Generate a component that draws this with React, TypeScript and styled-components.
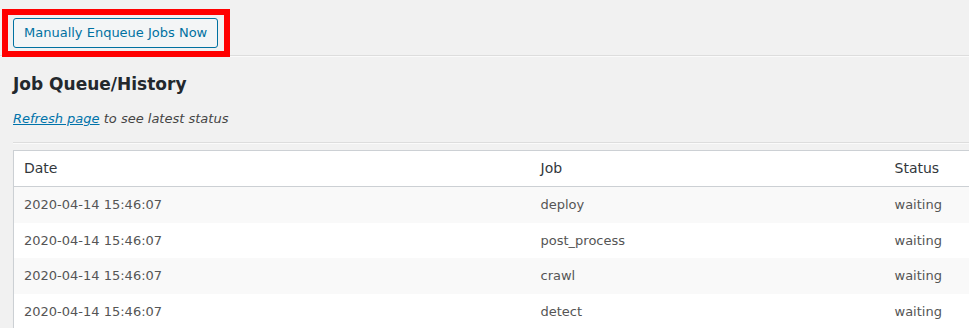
import styled, { createGlobalStyle } from "styled-components";

const adminBg = "#f1f1f1";
const tableBorder = "#ccd0d4";
const wpBlue = "#0071a1";

const GlobalStyle = createGlobalStyle`
  html, body {
    margin: 0;
    padding: 0;
    background: ${adminBg};
    overflow: hidden;
  }
  body {
    font-family: "DejaVu Sans", "Noto Sans", sans-serif;
    font-size: 13px;
    line-height: 1.4em;
    color: #444;
  }
`;

const Page = styled.div`
  width: 969px;
  height: 328px;
  overflow: hidden;
`;

const TopBar = styled.div`
  display: flex;
  align-items: flex-start;
  padding: 9px 0 0 2px;
  height: 46px;
`;

// red annotation frame drawn over the button (and the divider under it)
const Highlight = styled.div`
  position: relative;
  z-index: 1;
  display: flex;
  border: 6px solid #ff0000;
  padding: 3px 6px 3px 5px;
  background: ${adminBg};
`;

const Button = styled.button`
  font-family: inherit;
  font-size: 13px;
  line-height: 28px;
  min-height: 30px;
  height: 30px;
  padding: 0 10px;
  margin: 0;
  color: ${wpBlue};
  border: 1px solid ${wpBlue};
  border-radius: 3px;
  background: #f3f5f6;
  cursor: pointer;
  white-space: nowrap;
`;

const Divider = styled.hr`
  margin: 0;
  border: 0;
  border-top: 1px solid #dddddd;
  border-bottom: 1px solid #fafafa;
  height: 0;
`;

const Main = styled.div`
  padding-left: 13px;
`;

const Heading = styled.h2`
  margin: 16px 0 14px;
  font-size: 17px;
  line-height: 1.3;
  font-weight: 700;
  color: #23282d;
`;

const Note = styled.p`
  margin: 0 0 13px;
  font-style: italic;
  font-size: 13px;
  line-height: 1.5;
  color: #444;

  a {
    color: #0073aa;
    text-decoration: underline;
  }
`;

const Table = styled.table`
  width: 1000px;
  margin-top: 6px;
  table-layout: fixed;
  border-collapse: collapse;
  border-spacing: 0;
  background: #fff;
  border: 1px solid ${tableBorder};
  box-shadow: 0 1px 1px rgba(0, 0, 0, 0.04);
`;

const Th = styled.th`
  text-align: left;
  font-weight: 400;
  font-size: 14px;
  line-height: 1.4em;
  padding: 8px 10px;
  color: #32373c;
  border-bottom: 1px solid ${tableBorder};
`;

const Row = styled.tr<{ $alt: boolean }>`
  background: ${(p) => (p.$alt ? "#f9f9f9" : "#fff")};
`;

const Td = styled.td`
  font-size: 13px;
  line-height: 1.5em;
  padding: 8px 10px;
  color: #555;
  white-space: nowrap;
`;

const jobs = [
  { date: "2020-04-14 15:46:07", job: "deploy", status: "waiting" },
  { date: "2020-04-14 15:46:07", job: "post_process", status: "waiting" },
  { date: "2020-04-14 15:46:07", job: "crawl", status: "waiting" },
  { date: "2020-04-14 15:46:07", job: "detect", status: "waiting" },
];

export default function App() {
  return (
    <Page>
      <GlobalStyle />
      <TopBar>
        <Highlight>
          <Button type="button">Manually Enqueue Jobs Now</Button>
        </Highlight>
      </TopBar>
      <Divider />
      <Main>
        <Heading>Job Queue/History</Heading>
        <Note>
          <a href="#">Refresh page</a> to see latest status
        </Note>
        <Divider />
        <Table>
          <colgroup>
            <col style={{ width: 517 }} />
            <col style={{ width: 354 }} />
            <col />
          </colgroup>
          <thead>
            <tr>
              <Th>Date</Th>
              <Th>Job</Th>
              <Th>Status</Th>
            </tr>
          </thead>
          <tbody>
            {jobs.map((j, i) => (
              <Row key={i} $alt={i % 2 === 0}>
                <Td>{j.date}</Td>
                <Td>{j.job}</Td>
                <Td>{j.status}</Td>
              </Row>
            ))}
          </tbody>
        </Table>
      </Main>
    </Page>
  );
}
